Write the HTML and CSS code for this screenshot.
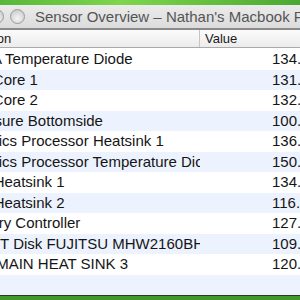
FILE: index.html
```html
<!DOCTYPE html>
<html lang="en">
<head>
    <meta charset="UTF-8">
    <title>Sensor Overview</title>
    <link rel="stylesheet" href="styles.css">
</head>
<body>
    <div class="desktop"></div>
    <div class="window">
        <div class="titlebar">
            <span class="light"></span>
            <span class="light"></span>
            <span class="light"></span>
            <span class="title">Sensor Overview – Nathan's Macbook Pro</span>
        </div>
        <div class="header">
            <div class="col-name">Location</div>
            <div class="col-value">Value</div>
        </div>
        <div class="rows">
            <div class="row"><div class="col-name">CPU A Temperature Diode</div><div class="col-value">134.6 °F</div></div>
            <div class="row"><div class="col-name">CPU Core 1</div><div class="col-value">131.0 °F</div></div>
            <div class="row"><div class="col-name">CPU Core 2</div><div class="col-value">132.8 °F</div></div>
            <div class="row"><div class="col-name">Enclosure Bottomside</div><div class="col-value">100.4 °F</div></div>
            <div class="row"><div class="col-name">Graphics Processor Heatsink 1</div><div class="col-value">136.4 °F</div></div>
            <div class="row"><div class="col-name">Graphics Processor Temperature Diode</div><div class="col-value">150.8 °F</div></div>
            <div class="row"><div class="col-name">Main Heatsink 1</div><div class="col-value">134.6 °F</div></div>
            <div class="row"><div class="col-name">Main Heatsink 2</div><div class="col-value">116.6 °F</div></div>
            <div class="row"><div class="col-name">Memory Controller</div><div class="col-value">127.4 °F</div></div>
            <div class="row"><div class="col-name">SMART Disk FUJITSU MHW2160BHP</div><div class="col-value">109.4 °F</div></div>
            <div class="row"><div class="col-name">PWR MAIN HEAT SINK 3</div><div class="col-value">120.2 °F</div></div>
            <div class="row"></div>
        </div>
    </div>
</body>
</html>
```

FILE: styles.css
```css
body {
    margin: 0;
    width: 300px;
    height: 300px;
    overflow: hidden;
    background: #3f9a2a;
    font-family: "Liberation Sans", Arial, sans-serif;
}

.desktop {
    height: 5px;
    background: linear-gradient(90deg, #57b73a 0%, #7fd54c 40%, #4aa832 100%);
}

.window {
    margin-left: -43px;
    width: 440px;
    background: #fff;
    border-bottom: 1px solid #2a3a22;
}

.titlebar {
    height: 23px;
    display: flex;
    align-items: center;
    gap: 6px;
    padding-left: 11px;
    background: linear-gradient(#ebebeb, #dcdcdc);
    border-bottom: 2px solid #8a8a8a;
}

.light {
    width: 13px;
    height: 13px;
    flex: none;
    border-radius: 50%;
    border: 1px solid #9a9a9a;
    background: radial-gradient(circle at 50% 65%, #f4f4f4 0%, #d2d2d2 70%, #bdbdbd 100%);
}

.title {
    margin-left: 4px;
    font-size: 15px;
    color: #555;
    white-space: nowrap;
}

.header {
    display: flex;
    height: 17px;
    font-size: 13px;
    color: #1a1a1a;
    background: linear-gradient(#fbfbfb, #ececec);
    border-bottom: 1px solid #a9a9a9;
}

.header .col-name,
.header .col-value {
    line-height: 17px;
    padding-left: 5px;
}

.header .col-name {
    width: 237px;
    border-right: 1px solid #c4c4c4;
}

.rows {
    padding-top: 1px;
}

.row {
    display: flex;
    height: 20.5px;
    line-height: 20.5px;
    font-size: 15px;
    color: #151515;
    white-space: nowrap;
}

.row:nth-child(even) {
    background: #edf3fe;
}

.col-name {
    width: 243px;
    overflow: hidden;
}

.row .col-value {
    padding-left: 72px;
}
```
